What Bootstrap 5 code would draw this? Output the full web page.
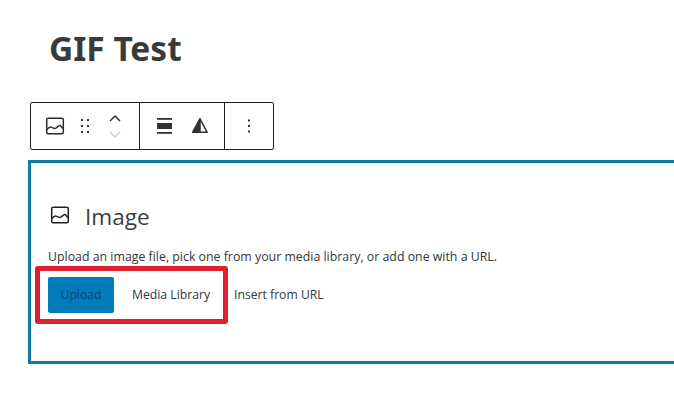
<!DOCTYPE html>
<html lang="en">
<head>
    <meta charset="UTF-8">
    <title>GIF Test</title>
    <link href="https://cdn.jsdelivr.net/npm/bootstrap@5.3.0/dist/css/bootstrap.min.css" rel="stylesheet">
    <style>
        body {
            background: #fff;
            overflow: hidden;
            font-family: "Open Sans", "Noto Sans", sans-serif;
            color: #32373c;
        }
        .page-wrap {
            padding: 26px 0 0 28px;
            width: 674px;
            height: 406px;
            overflow: hidden;
        }
        .post-title {
            font-family: "Noto Sans", sans-serif;
            font-size: 33.5px;
            font-weight: 700;
            line-height: 44px;
            margin: 0 0 32px 21px;
            color: #3a3a3a;
        }
        .block-bar {
            width: 244px;
            height: 48px;
            margin-left: 2px;
            border: 1px solid #1e1e1e;
            border-radius: 2px;
        }
        .bar-group + .bar-group {
            border-left: 1px solid #1e1e1e;
        }
        .bar-one { width: 108px; padding-left: 14px; }
        .bar-two { width: 85px; padding-left: 16px; gap: 14px; }
        .bar-three { width: 49px; justify-content: center; }
        .bar-one svg, .bar-two svg, .bar-three svg { display: block; }
        .drag-dots { margin-left: 11px; }
        .mover { margin-left: 14px; gap: 9px; }
        .image-block {
            width: 700px;
            height: 204px;
            margin-top: 10px;
            border: 3px solid #0e7c9e;
            border-right: 0;
            padding: 39px 0 0 17px;
            position: relative;
        }
        .block-head {
            font-size: 22.6px;
            line-height: 30px;
            color: #3a3f44;
            gap: 15px;
            margin-left: 2px;
        }
        .head-icon { margin-top: -4px; }
        .block-help {
            font-size: 12.35px;
            line-height: 16px;
            margin-top: 17px;
            color: #32373c;
        }
        .block-actions { margin-top: 12px; font-size: 12.2px; color: #32373c; }
        .upload-btn {
            width: 66px;
            height: 36px;
            padding: 1px 0 0;
            border: 0;
            border-radius: 2px;
            background: #007cba;
            color: #0b4674;
            font-size: 12.2px;
        }
        .plain-action { margin-left: 18px; padding-top: 1px; }
        .plain-action + .plain-action { margin-left: 24px; }
        .red-mark {
            position: absolute;
            left: 4px;
            top: 103px;
            width: 193px;
            height: 58px;
            border: 5px solid #e0202e;
            border-radius: 3px;
        }
    </style>
</head>
<body>
<div class="page-wrap">
    <h1 class="post-title">GIF Test</h1>

    <div class="block-bar d-flex">
        <div class="bar-group bar-one d-flex align-items-center">
            <svg width="20" height="20" viewBox="0 0 20 20" fill="none" stroke="#2b2b2b" stroke-width="1.5">
                <rect x="1.7" y="2.2" width="16.6" height="15.6" rx="1.5"/>
                <path d="M2 13.5c2-2.5 3.5-3 5-2s2.5 1.5 4 .5 3-3 4-2.5 2 2 3 3"/>
            </svg>
            <svg class="drag-dots" width="18" height="18" viewBox="0 0 18 18" fill="#333">
                <rect x="5" y="2" width="2" height="2"/><rect x="11" y="2" width="2" height="2"/>
                <rect x="5" y="8" width="2" height="2"/><rect x="11" y="8" width="2" height="2"/>
                <rect x="5" y="14" width="2" height="2"/><rect x="11" y="14" width="2" height="2"/>
            </svg>
            <div class="mover d-flex flex-column">
                <svg width="14" height="8" viewBox="0 0 14 8" fill="none" stroke="#333" stroke-width="1.5"><path d="M2 7l5-5 5 5"/></svg>
                <svg width="14" height="8" viewBox="0 0 14 8" fill="none" stroke="#ccc" stroke-width="1.5"><path d="M2 1l5 5 5-5"/></svg>
            </div>
        </div>
        <div class="bar-group bar-two d-flex align-items-center">
            <svg width="20" height="20" viewBox="0 0 20 20" fill="#333">
                <rect x="1" y="2" width="15" height="1.8"/>
                <rect x="1" y="7" width="15" height="6"/>
                <rect x="1" y="16" width="15" height="1.8"/>
            </svg>
            <svg width="20" height="20" viewBox="0 0 20 20">
                <path d="M10 2.8L17.2 16.3H2.8z" fill="#fff" stroke="#333" stroke-width="1.5" stroke-linejoin="round"/>
                <path d="M10 2.8L2.8 16.3H10z" fill="#333" stroke="#333" stroke-width="1.5" stroke-linejoin="round"/>
            </svg>
        </div>
        <div class="bar-group bar-three d-flex align-items-center">
            <svg width="18" height="20" viewBox="0 0 18 20" fill="#333">
                <rect x="8" y="3.5" width="2" height="2"/>
                <rect x="8" y="9" width="2" height="2"/>
                <rect x="8" y="14.5" width="2" height="2"/>
            </svg>
        </div>
    </div>

    <div class="image-block">
        <div class="block-head d-flex align-items-center">
            <svg class="head-icon" width="20" height="20" viewBox="0 0 20 20" fill="none" stroke="#1e1e1e" stroke-width="1.5">
                <rect x="1.7" y="2.2" width="16.6" height="15.6" rx="1.5"/>
                <path d="M2 13.5c2-2.5 3.5-3 5-2s2.5 1.5 4 .5 3-3 4-2.5 2 2 3 3"/>
            </svg>
            <span>Image</span>
        </div>
        <div class="block-help">Upload an image file, pick one from your media library, or add one with a URL.</div>
        <div class="block-actions d-flex align-items-center">
            <button type="button" class="btn upload-btn">Upload</button>
            <span class="plain-action">Media Library</span>
            <span class="plain-action">Insert from URL</span>
        </div>
        <div class="red-mark"></div>
    </div>
</div>
<script src="https://cdn.jsdelivr.net/npm/bootstrap@5.3.0/dist/js/bootstrap.bundle.min.js"></script>
</body>
</html>
